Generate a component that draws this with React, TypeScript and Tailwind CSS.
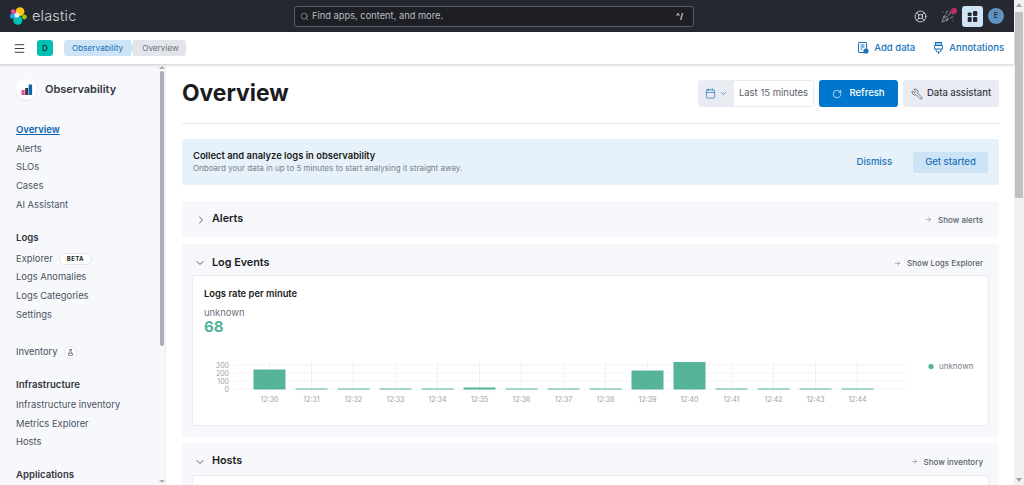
import { Calendar, ChevronDown, ChevronRight, RotateCw, ArrowRight, FlaskConical, Wrench, Menu, Search, LifeBuoy, PartyPopper } from "lucide-react"

const times = ["12:30", "12:31", "12:32", "12:33", "12:34", "12:35", "12:36", "12:37", "12:38", "12:39", "12:40", "12:41", "12:42", "12:43", "12:44"]
const heights = [20, 1, 1, 1, 1, 2, 1, 1, 1, 19, 27.5, 1, 1, 1, 1]

function NavLink({ label, active }: { label: string; active?: boolean }) {
  return (
    <div className={active ? "h-[18.7px] leading-[18px] text-[9.5px] font-semibold text-[#0b64ad] underline" : "h-[18.7px] leading-[18px] text-[9.4px] text-[#4b5260]"}>
      {label}
    </div>
  )
}

function NavHead({ label }: { label: string }) {
  return <div className="h-[20px] leading-[18px] text-[9.6px] font-semibold text-[#343741]">{label}</div>
}

function AddDataIcon() {
  return (
    <svg width="11" height="12" viewBox="0 0 11 12" fill="none" stroke="#1a73b8" strokeWidth="1" className="shrink-0">
      <rect x="0.5" y="0.5" width="8" height="10" rx="0.5" />
      <path d="M2.5 3h4M2.5 5h4M2.5 7h2" />
      <circle cx="8" cy="9" r="2.6" fill="#1a73b8" stroke="none" />
    </svg>
  )
}

function AnnotationIcon() {
  return (
    <svg width="9" height="12" viewBox="0 0 9 12" fill="none" stroke="#1a73b8" strokeWidth="1" className="shrink-0">
      <rect x="1.5" y="0.5" width="6" height="3" fill="#9cc8e8" />
      <path d="M0.5 3.5h8v3.5h-8zM2 7v2l1.5 1h2L7 9V7M4.5 10v2" />
    </svg>
  )
}

function Chart() {
  return (
    <svg width="796" height="80" viewBox="192 350 796 80" className="block">
      {[365, 373, 381, 389].map((y, i) => (
        <g key={y}>
          <line x1="235" x2="908" y1={y} y2={y} stroke="#eef0f5" strokeDasharray="2 1" />
          <text x="229" y={y + 2.5} textAnchor="end" fontSize="7" fill="#9a9fa8">{300 - i * 100}</text>
        </g>
      ))}
      {times.map((t, i) => {
        const cx = 269.5 + i * 42
        return (
          <g key={t}>
            <line x1={cx} x2={cx} y1="362" y2="392" stroke="#f1f2f7" />
            <rect x={cx - 16} y={389.5 - heights[i]} width="32" height={heights[i]} fill="#54b399" />
            <text x={cx} y="401.5" textAnchor="middle" fontSize="7" fill="#9a9fa8">{t}</text>
          </g>
        )
      })}
      <circle cx="931" cy="366.5" r="2.6" fill="#54b399" />
      <text x="939" y="369" fontSize="8" fill="#777c87">unknown</text>
    </svg>
  )
}

export default function App() {
  return (
    <div className="flex h-[485px] w-[1024px] overflow-hidden bg-white font-['Inter',sans-serif]">
      <div className="flex w-[1014px] flex-col">
        {/* Top bar */}
        <header className="flex h-[32px] shrink-0 items-center bg-[#25282f] pl-[10px] pr-[10px]">
          <svg width="17" height="18" viewBox="0 0 17 18" className="shrink-0">
            <circle cx="10" cy="4.6" r="4.4" fill="#fec514" />
            <circle cx="7.8" cy="13.2" r="4.6" fill="#00bfb3" />
            <circle cx="3.2" cy="4.6" r="2.4" fill="#f04e98" />
            <circle cx="2.6" cy="9" r="2.6" fill="#1ba9f5" />
            <circle cx="14.4" cy="10" r="2.4" fill="#93c90e" />
            <circle cx="6.8" cy="8" r="2.6" fill="#e8ebf0" />
          </svg>
          <span className="ml-[5px] w-[262px] text-[14.5px] font-light tracking-[0.2px] text-[#d5d8dd]">elastic</span>
          <div className="flex h-[21px] w-[400px] items-center rounded-[3px] border border-[#5a5e68] bg-[#1d1f25] pl-[5px] pr-[10px] text-[#b8bcc4]">
            <Search size={9} strokeWidth={1.5} />
            <span className="ml-[3px] flex-1 text-[9.3px]">Find apps, content, and more.</span>
            <span className="text-[8px] font-bold text-[#d5d8dd]">^/</span>
          </div>
          <div className="ml-auto flex items-center">
            <LifeBuoy size={13} strokeWidth={1.6} className="text-[#dfe3e8]" />
            <div className="relative ml-[14px]">
              <PartyPopper size={13} strokeWidth={1.3} className="text-[#b8bcc4]" />
              <span className="absolute -right-[3px] -top-[2px] h-[6px] w-[6px] rounded-full bg-[#bd2d6f]" />
            </div>
            <div className="ml-[8px] flex h-[21px] w-[21px] items-center justify-center rounded-[3px] bg-[#cfe5f5]">
              <svg width="11" height="11" viewBox="0 0 11 11" fill="#25282f">
                <rect x="0.7" y="1.5" width="4" height="3.5" rx="1" />
                <rect x="6" y="0" width="4.3" height="5" rx="1" />
                <rect x="0.7" y="6" width="4" height="5" rx="1" />
                <rect x="6" y="6" width="4.3" height="5" rx="1" />
              </svg>
            </div>
            <div className="ml-[5px] flex h-[16px] w-[16px] items-center justify-center rounded-full bg-[#6092c0] text-[7.5px] font-medium text-[#1d2a3a]">E</div>
          </div>
        </header>

        {/* Breadcrumb bar */}
        <div className="z-10 flex h-[32px] shrink-0 items-center bg-white pl-[13px] pr-[10px] shadow-[0_1px_3px_rgba(0,0,0,0.2)]">
          <Menu size={13} strokeWidth={1.8} className="text-[#343741]" />
          <div className="ml-[11px] flex h-[16px] w-[16px] items-center justify-center rounded-[3px] bg-[#00bfb3] text-[8px] font-medium text-[#1a1c21]">D</div>
          <div className="ml-[11px] flex h-[16px] items-center rounded-l-[3px] bg-[#cce4f5] pl-[8px] pr-[7px] text-[8.2px] text-[#1d71b8]">Observability</div>
          <div className="h-0 w-0 border-y-[8px] border-l-[4px] border-y-transparent border-l-[#cce4f5]" />
          <div className="-ml-[1px] flex h-[16px] items-center rounded-r-[3px] bg-[#e3e5ea] pl-[9px] pr-[7px] text-[8.2px] text-[#69707d]">Overview</div>
          <div className="ml-auto flex items-center text-[9.5px] font-medium text-[#1a73b8]">
            <AddDataIcon />
            <span className="ml-[5px]">Add data</span>
            <span className="ml-[19px]"><AnnotationIcon /></span>
            <span className="ml-[6px]">Annotations</span>
          </div>
        </div>

        <div className="flex min-h-0 flex-1">
          {/* Side nav */}
          <aside className="flex w-[166px] shrink-0 border-r border-[#eceef3] bg-[#f6f8fc]">
            <div className="w-[159px] overflow-hidden pl-[16px]">
              <div className="mt-[15px] flex h-[21px] items-center">
                <div className="flex h-[21px] w-[21px] items-center justify-center rounded-full bg-white shadow-[0_1px_2px_rgba(0,0,0,0.08)]">
                  <svg width="12" height="12" viewBox="0 0 12 12">
                    <rect x="0.5" y="6" width="3.2" height="5" fill="#f04e98" />
                    <rect x="4.2" y="4" width="3" height="7" fill="#343741" />
                    <rect x="7.7" y="0.5" width="3.4" height="10.5" fill="#0b64ad" />
                  </svg>
                </div>
                <span className="ml-[8px] text-[11px] font-semibold text-[#343741]">Observability</span>
              </div>
              <div className="mt-[21px]">
                {["Overview", "Alerts", "SLOs", "Cases", "AI Assistant"].map((l, i) => <NavLink key={l} label={l} active={i === 0} />)}
              </div>
              <div className="mt-[15px]"><NavHead label="Logs" /></div>
              <div className="flex h-[18.7px] items-center">
                <span className="text-[9.4px] text-[#4b5260]">Explorer</span>
                <span className="ml-[6px] flex h-[12px] items-center rounded-full border border-[#e3e6ec] bg-white px-[7px] text-[6px] font-bold tracking-[0.4px] text-[#1a1c21]">BETA</span>
              </div>
              {["Logs Anomalies", "Logs Categories", "Settings"].map((l) => <NavLink key={l} label={l} />)}
              <div className="mt-[19px] flex h-[18.7px] items-center">
                <span className="text-[9.4px] text-[#4b5260]">Inventory</span>
                <span className="ml-[6px] flex h-[13px] w-[13px] items-center justify-center rounded-full border border-[#e3e6ec] bg-white">
                  <FlaskConical size={7} className="text-[#343741]" />
                </span>
              </div>
              <div className="mt-[14px]"><NavHead label="Infrastructure" /></div>
              {["Infrastructure inventory", "Metrics Explorer", "Hosts"].map((l) => <NavLink key={l} label={l} />)}
              <div className="mt-[14px]"><NavHead label="Applications" /></div>
            </div>
            <div className="flex w-[6px] flex-col items-center">
              <div className="mt-[2px] h-0 w-0 border-x-[3px] border-b-[3px] border-x-transparent border-b-[#a8abb2]" />
              <div className="mt-[2px] h-[275px] w-[4px] rounded-full bg-[#a9adb6]" />
              <div className="mt-auto mb-[2px] h-0 w-0 border-x-[3px] border-t-[3px] border-x-transparent border-t-[#a8abb2]" />
            </div>
          </aside>

          {/* Main */}
          <main className="min-w-0 flex-1 overflow-hidden pl-[16px] pr-[15px]">
            <div className="flex h-[60px] items-center border-b border-[#e6e8ee]">
              <h1 className="text-[22.8px] font-bold leading-none text-[#1a1c21]">Overview</h1>
              <div className="ml-auto flex h-[27px] w-[116px] items-stretch overflow-hidden rounded-[3px] border border-[#e8ebf0]">
                <div className="flex w-[35px] items-center justify-center gap-[3px] bg-[#e9edf3] text-[#1a73b8]">
                  <Calendar size={11} strokeWidth={1.5} />
                  <ChevronDown size={9} strokeWidth={1.8} />
                </div>
                <div className="flex flex-1 items-center justify-center bg-white text-[9.5px] text-[#5a606b]">Last 15 minutes</div>
              </div>
              <button className="ml-[5px] flex h-[27px] w-[79px] items-center justify-center gap-[7px] rounded-[3px] bg-[#0077cc] text-[9.5px] font-medium text-white">
                <RotateCw size={10} strokeWidth={1.6} />
                Refresh
              </button>
              <button className="ml-[5px] flex h-[27px] w-[96px] items-center justify-center gap-[4px] rounded-[3px] bg-[#e9edf3] text-[9.5px] font-medium text-[#343741]">
                <Wrench size={12} strokeWidth={1.3} className="-scale-x-100" />
                Data assistant
              </button>
            </div>

            <div className="mt-[15px] flex h-[46px] items-center rounded-[3px] bg-[#e6f1fa] pl-[11px] pr-[11px]">
              <div>
                <div className="text-[9.4px] font-semibold leading-[12px] text-[#1a1c21]">Collect and analyze logs in observability</div>
                <div className="text-[8px] leading-[12px] text-[#7a808b]">Onboard your data in up to 5 minutes to start analysing it straight away.</div>
              </div>
              <span className="ml-auto text-[9.5px] font-medium text-[#1d71b8]">Dismiss</span>
              <button className="ml-[21px] flex h-[21px] w-[75px] items-center justify-center rounded-[3px] bg-[#cce4f5] text-[9.5px] font-medium text-[#1d71b8]">Get started</button>
            </div>

            <section className="mt-[16px] flex h-[36px] items-center rounded-[3px] bg-[#f6f8fc] pl-[13px] pr-[16px] pt-[1px]">
              <ChevronRight size={12} strokeWidth={1.6} className="text-[#343741]" />
              <span className="ml-[5px] text-[10.8px] font-semibold text-[#1a1c21]">Alerts</span>
              <span className="ml-auto flex items-center gap-[6px] text-[8px] font-medium text-[#5a606b]">
                <ArrowRight size={7} strokeWidth={1.5} />
                Show alerts
              </span>
            </section>

            <section className="mt-[7px] h-[193px] rounded-[3px] bg-[#f6f8fc] px-[10px]">
              <div className="flex h-[31px] items-center pl-[2px] pr-[6px] pt-[7px]">
                <ChevronDown size={12} strokeWidth={1.6} className="text-[#343741]" />
                <span className="ml-[6px] text-[10.8px] font-semibold text-[#1a1c21]">Log Events</span>
                <span className="ml-auto flex items-center gap-[6px] text-[8px] font-medium text-[#5a606b]">
                  <ArrowRight size={7} strokeWidth={1.5} />
                  Show Logs Explorer
                </span>
              </div>
              <div className="h-[151px] rounded-[3px] border border-[#e8ebf0] bg-white">
                <div className="pl-[11px] pt-[12px] text-[9.4px] font-semibold leading-[12px] text-[#1a1c21]">Logs rate per minute</div>
                <div className="pl-[11px] pt-[7px] text-[9.4px] leading-[12px] text-[#69707d]">unknown</div>
                <div className="pl-[11px] text-[15px] font-bold leading-[15px] text-[#54b399]">68</div>
                <div className="-ml-px mt-[16px]"><Chart /></div>
              </div>
            </section>

            <section className="mt-[6px] h-[60px] rounded-t-[3px] bg-[#f6f8fc] px-[10px]">
              <div className="flex h-[32px] items-center pl-[2px] pr-[6px] pt-[5px]">
                <ChevronDown size={12} strokeWidth={1.6} className="text-[#343741]" />
                <span className="ml-[6px] text-[10.8px] font-semibold text-[#1a1c21]">Hosts</span>
                <span className="ml-auto flex items-center gap-[6px] text-[8px] font-medium text-[#5a606b]">
                  <ArrowRight size={7} strokeWidth={1.5} />
                  Show inventory
                </span>
              </div>
              <div className="h-[40px] rounded-t-[3px] border border-[#e8ebf0] bg-white" />
            </section>
          </main>
        </div>
      </div>

      {/* Browser scrollbar */}
      <div className="flex w-[10px] shrink-0 flex-col items-center bg-[#f1f1f1]">
        <div className="mt-[3px] h-0 w-0 border-x-[3px] border-b-[4px] border-x-transparent border-b-[#a3a3a3]" />
        <div className="mt-[5px] h-[186px] w-[8px] bg-[#c1c1c1]" />
        <div className="mt-auto mb-[3px] h-0 w-0 border-x-[3px] border-t-[4px] border-x-transparent border-t-[#a3a3a3]" />
      </div>
    </div>
  )
}
